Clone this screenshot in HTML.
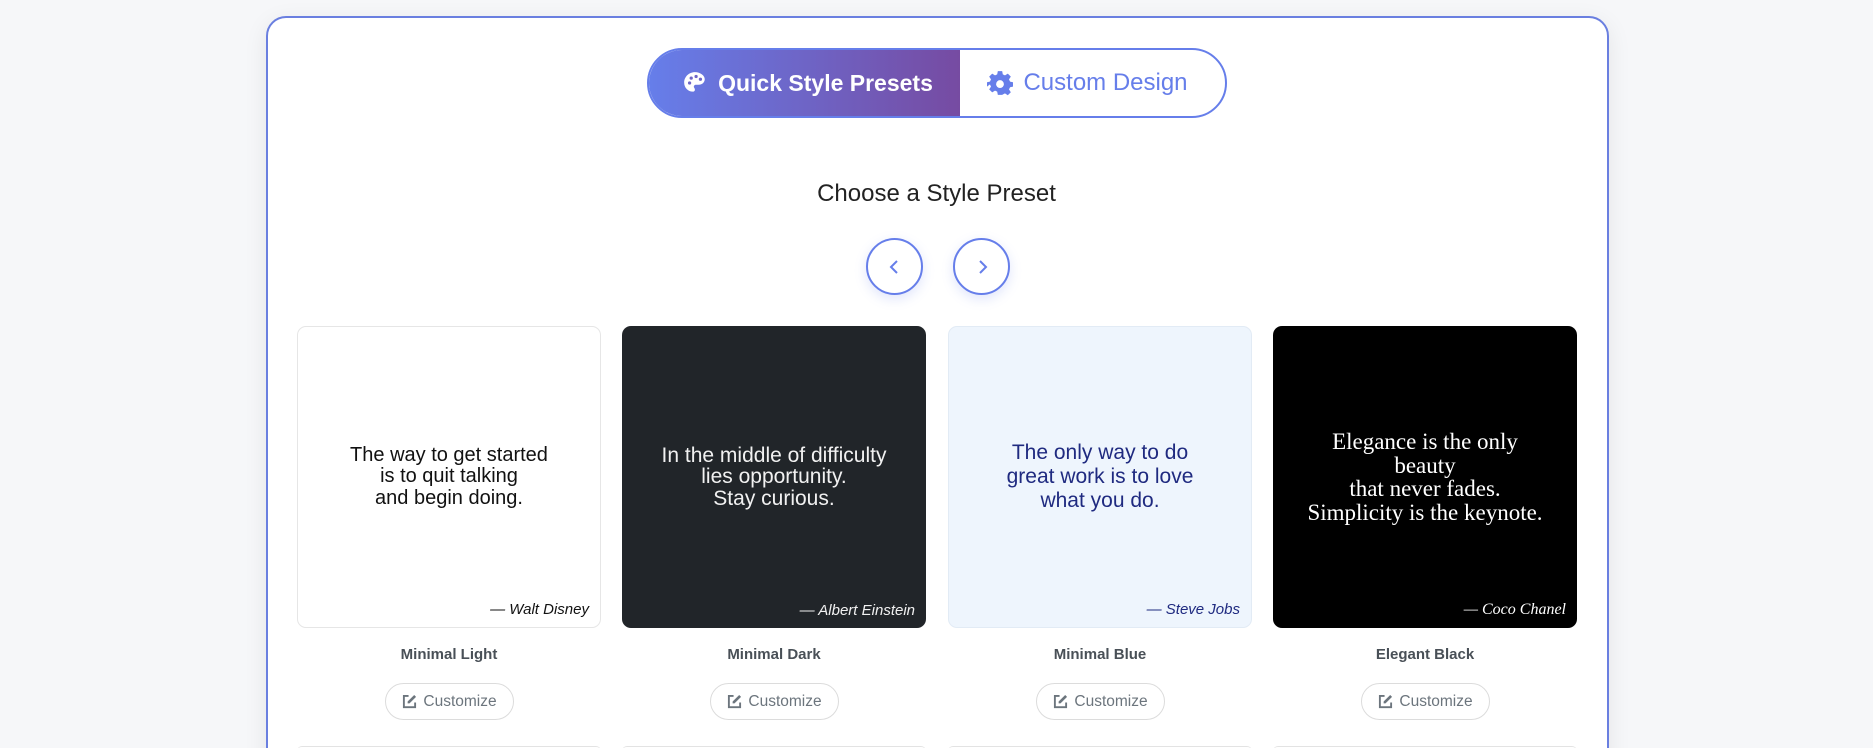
<!DOCTYPE html>
<html style="height:748px;overflow:hidden"><head><meta charset="utf-8"><style>
*{box-sizing:border-box;margin:0;padding:0}
body{width:1873px;height:748px;overflow:hidden;background:#f6f7f9;font-family:"Liberation Sans",sans-serif;position:relative}
.wrap{position:absolute;left:266px;top:16px;width:1343px;height:760px;background:#fff;border:2px solid #6a7fe0;border-radius:20px;box-shadow:0 6px 24px rgba(0,0,0,.08)}
.tog{position:absolute;left:647px;top:48px;width:580px;height:70px;border:2px solid #667eea;border-radius:35px;overflow:hidden;display:flex}
.tog .a{width:311px;background:linear-gradient(90deg,#667eea,#764ba2);color:#fff;display:flex;align-items:center;justify-content:center;font-size:23px;font-weight:bold;gap:10px;padding-left:6px}
.tog .b{flex:1;color:#667eea;display:flex;align-items:center;justify-content:center;font-size:24px;gap:10px;padding-right:10px}
h2{position:absolute;left:0;width:1873px;top:180px;text-align:center;font-size:24px;font-weight:normal;color:#222}
.arr{position:absolute;top:238px;width:57px;height:57px;border:2px solid #667eea;border-radius:50%;box-shadow:0 4px 12px rgba(102,126,234,.2);display:flex;align-items:center;justify-content:center;background:#fff}
.card{position:absolute;top:326px;width:304px;height:302px;border-radius:9px;display:flex;align-items:center;justify-content:center;text-align:center}
.q{font-size:20px;line-height:21.5px}
.au{position:absolute;right:11px;bottom:9px;font-style:italic;font-size:15px}
.lbl{position:absolute;top:646px;width:304px;text-align:center;font-size:15px;font-weight:bold;color:#495057}
.btn{position:absolute;top:683px;width:129px;height:37px;border:1px solid #dcdcdc;border-radius:19px;display:flex;align-items:center;justify-content:center;gap:6px;font-size:15.5px;color:#6c757d;background:#fff}
.nx{position:absolute;top:746px;width:304px;height:10px;border-top:1px solid #e3e3e3;border-radius:9px}
</style></head><body>
<div class="wrap"></div>
<div class="tog"><div class="a"><svg width="26" height="26" viewBox="0 0 24 24"><path fill="#fff" d="M12 2C6.5 2 2 6.3 2 11.6c0 4.6 3.6 8.4 8 8.4 1.4 0 1.9-1 1.9-1.9 0-1.3-1-1.6-1-2.7 0-1 .8-1.8 1.8-1.8h2.6c3.1 0 5.7-2.1 5.7-5.2C21 5.4 17 2 12 2z"/><circle cx="7" cy="12" r="1.5" fill="#6f66c8"/><circle cx="8.5" cy="7.5" r="1.5" fill="#6f66c8"/><circle cx="13" cy="6" r="1.5" fill="#6f66c8"/><circle cx="17" cy="8.5" r="1.5" fill="#6f66c8"/></svg>Quick Style Presets</div>
<div class="b"><svg width="26" height="26" viewBox="0 0 24 24"><path fill="#667eea" d="M10 1h4l.6 3 2 1 2.6-1.7 2.8 2.8L20.3 8.7l1 2 2.7.6v4l-2.7.6-1 2 1.7 2.6-2.8 2.8-2.6-1.7-2 1L14 23h-4l-.6-3-2-1-2.6 1.7-2.8-2.8 1.7-2.6-1-2L0 15.3v-4l2.7-.6 1-2L2 6.1l2.8-2.8 2.6 1.7 2-1z"/><circle cx="12" cy="13" r="3.6" fill="#fff"/></svg>Custom Design</div></div>
<h2>Choose a Style Preset</h2>
<div class="arr" style="left:866px"><svg width="18" height="18" viewBox="0 0 18 18"><path d="M11 3 5 9l6 6" fill="none" stroke="#667eea" stroke-width="2"/></svg></div>
<div class="arr" style="left:953px"><svg width="18" height="18" viewBox="0 0 18 18"><path d="M7 3l6 6-6 6" fill="none" stroke="#667eea" stroke-width="2"/></svg></div>

<div class="card" style="left:297px;background:#fff;border:1px solid #e6e6e6;color:#111"><div class="q">The way to get started<br>is to quit talking<br>and begin doing.</div><div class="au">— Walt Disney</div></div>
<div class="card" style="left:622px;background:#212529;color:#f1f1f1"><div class="q" style="font-size:21px">In the middle of difficulty<br>lies opportunity.<br>Stay curious.</div><div class="au">— Albert Einstein</div></div>
<div class="card" style="left:948px;background:#eef5fd;border:1px solid #e2ebf5;color:#1f2a80"><div class="q" style="font-size:21px;line-height:24px">The only way to do<br>great work is to love<br>what you do.</div><div class="au">— Steve Jobs</div></div>
<div class="card" style="left:1273px;background:#000;color:#fff;font-family:'Liberation Serif',serif"><div class="q" style="font-size:23px;line-height:23.5px">Elegance is the only<br>beauty<br>that never fades.<br>Simplicity is the keynote.</div><div class="au" style="font-size:16px">— Coco Chanel</div></div>

<div class="lbl" style="left:297px">Minimal Light</div>
<div class="lbl" style="left:622px">Minimal Dark</div>
<div class="lbl" style="left:948px">Minimal Blue</div>
<div class="lbl" style="left:1273px">Elegant Black</div>

<div class="btn" style="left:385px"><svg width="15" height="15" viewBox="0 0 16 16"><path d="M7 2H2v12h12V9" fill="none" stroke="#6c757d" stroke-width="2"/><path d="M13 1l2 2-7 7H6V8z" fill="#6c757d"/></svg>Customize</div>
<div class="btn" style="left:710px"><svg width="15" height="15" viewBox="0 0 16 16"><path d="M7 2H2v12h12V9" fill="none" stroke="#6c757d" stroke-width="2"/><path d="M13 1l2 2-7 7H6V8z" fill="#6c757d"/></svg>Customize</div>
<div class="btn" style="left:1036px"><svg width="15" height="15" viewBox="0 0 16 16"><path d="M7 2H2v12h12V9" fill="none" stroke="#6c757d" stroke-width="2"/><path d="M13 1l2 2-7 7H6V8z" fill="#6c757d"/></svg>Customize</div>
<div class="btn" style="left:1361px"><svg width="15" height="15" viewBox="0 0 16 16"><path d="M7 2H2v12h12V9" fill="none" stroke="#6c757d" stroke-width="2"/><path d="M13 1l2 2-7 7H6V8z" fill="#6c757d"/></svg>Customize</div>

<div class="nx" style="left:297px"></div><div class="nx" style="left:622px"></div><div class="nx" style="left:948px"></div><div class="nx" style="left:1273px"></div>
</body></html>
